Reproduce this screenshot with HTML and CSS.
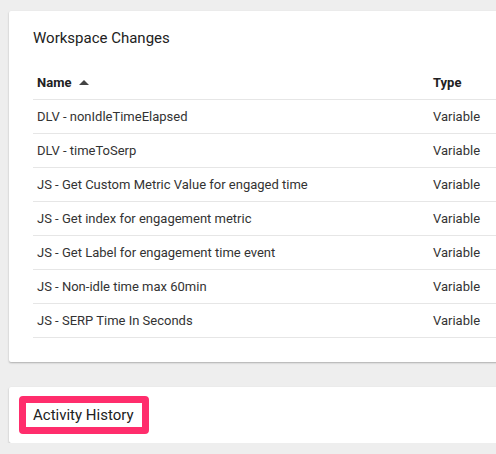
FILE: index.html
```html
<!DOCTYPE html>
<html>
<head>
<meta charset="utf-8">
<link rel="stylesheet" href="styles.css">
</head>
<body>
<div class="page">
  <section class="card changes">
    <h2 class="card-title">Workspace Changes</h2>
    <table class="grid">
      <thead>
        <tr>
          <th class="col-name">Name <span class="sort"></span></th>
          <th class="col-type">Type</th>
        </tr>
      </thead>
      <tbody>
        <tr><td>DLV - nonIdleTimeElapsed</td><td>Variable</td></tr>
        <tr><td>DLV - timeToSerp</td><td>Variable</td></tr>
        <tr><td>JS - Get Custom Metric Value for engaged time</td><td>Variable</td></tr>
        <tr><td>JS - Get index for engagement metric</td><td>Variable</td></tr>
        <tr><td>JS - Get Label for engagement time event</td><td>Variable</td></tr>
        <tr><td>JS - Non-idle time max 60min</td><td>Variable</td></tr>
        <tr><td>JS - SERP Time In Seconds</td><td>Variable</td></tr>
      </tbody>
    </table>
  </section>
  <section class="card history">
    <h2 class="highlight">Activity History</h2>
  </section>
</div>
</body>
</html>
```
FILE: styles.css
```css
html, body {
  margin: 0;
  padding: 0;
  background: #eeeeee;
  overflow: hidden;
}
body {
  font-family: Roboto, "Liberation Sans", sans-serif;
  color: #212121;
}
.page {
  padding: 11px 0 0 9px;
  display: flex;
  flex-direction: column;
  gap: 25px;
  width: 540px;
}
.card {
  background: #fff;
  border-radius: 2px;
  box-shadow: 0 1px 2px rgba(0,0,0,0.28);
}
.changes {
  padding: 0 0 24px 24px;
}
.card-title {
  margin: 0;
  font-size: 15px;
  font-weight: 400;
  line-height: 20px;
  padding-top: 17px;
  height: 37px;
  color: #212121;
}
.grid {
  border-collapse: collapse;
  width: 100%;
  font-size: 13px;
}
.grid th {
  text-align: left;
  font-weight: 700;
  height: 34px;
  padding: 0 0 0 4px;
  border-bottom: 1px solid #e6e6e6;
  vertical-align: middle;
  color: #212121;
}
.grid td {
  height: 33px;
  padding: 0 0 0 4px;
  border-bottom: 1px solid #e6e6e6;
  color: #333;
}
.col-name { width: 392px; }
.sort {
  display: inline-block;
  width: 0;
  height: 0;
  border-left: 5px solid transparent;
  border-right: 5px solid transparent;
  border-bottom: 5px solid #444;
  margin-left: 4px;
  vertical-align: 2px;
}
.history {
  height: 56px;
  padding: 9px 0 0 10px;
  box-sizing: border-box;
}
.highlight {
  display: inline-block;
  margin: 0;
  font-size: 15px;
  font-weight: 400;
  line-height: 24px;
  padding: 0 8px 0 7px;
  border: 7px solid #ff2d6c;
  border-radius: 4px;
  color: #212121;
}
```
